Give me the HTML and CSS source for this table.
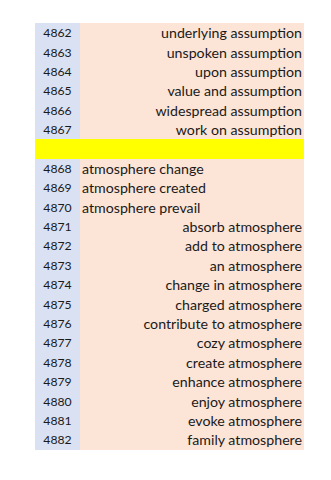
FILE: index.html
```html
<!DOCTYPE html>
<html>
<head>
<meta charset="utf-8">
<link rel="stylesheet" href="styles.css">
</head>
<body>
<div class="sheet">
  <div class="row"><div class="num">4862</div><div class="txt right">underlying assumption</div></div>
  <div class="row"><div class="num">4863</div><div class="txt right">unspoken assumption</div></div>
  <div class="row"><div class="num">4864</div><div class="txt right">upon assumption</div></div>
  <div class="row"><div class="num">4865</div><div class="txt right">value and assumption</div></div>
  <div class="row"><div class="num">4866</div><div class="txt right">widespread assumption</div></div>
  <div class="row"><div class="num">4867</div><div class="txt right">work on assumption</div></div>
  <div class="row sep"></div>
  <div class="row"><div class="num">4868</div><div class="txt">atmosphere change</div></div>
  <div class="row"><div class="num">4869</div><div class="txt">atmosphere created</div></div>
  <div class="row"><div class="num">4870</div><div class="txt">atmosphere prevail</div></div>
  <div class="row"><div class="num">4871</div><div class="txt right">absorb atmosphere</div></div>
  <div class="row"><div class="num">4872</div><div class="txt right">add to atmosphere</div></div>
  <div class="row"><div class="num">4873</div><div class="txt right">an atmosphere</div></div>
  <div class="row"><div class="num">4874</div><div class="txt right">change in atmosphere</div></div>
  <div class="row"><div class="num">4875</div><div class="txt right">charged atmosphere</div></div>
  <div class="row"><div class="num">4876</div><div class="txt right">contribute to atmosphere</div></div>
  <div class="row"><div class="num">4877</div><div class="txt right">cozy atmosphere</div></div>
  <div class="row"><div class="num">4878</div><div class="txt right">create atmosphere</div></div>
  <div class="row"><div class="num">4879</div><div class="txt right">enhance atmosphere</div></div>
  <div class="row"><div class="num">4880</div><div class="txt right">enjoy atmosphere</div></div>
  <div class="row"><div class="num">4881</div><div class="txt right">evoke atmosphere</div></div>
  <div class="row"><div class="num">4882</div><div class="txt right">family atmosphere</div></div>
</div>
</body>
</html>
```
FILE: styles.css
```css
html, body {
  margin: 0;
  padding: 0;
  background: #ffffff;
}
.sheet {
  margin: 23px 0 0 35px;
  width: 269px;
  display: flex;
  flex-direction: column;
  font-family: Lato, "Liberation Sans", sans-serif;
  color: #1a1a1a;
}
.row {
  display: grid;
  grid-template-columns: 45px 224px;
  height: 19.4px;
}
.num {
  background: #d9e1f2;
  font-size: 12.2px;
  display: flex;
  align-items: center;
  justify-content: center;
}
.txt {
  background: #fce4d6;
  font-size: 14.2px;
  display: flex;
  align-items: center;
  padding: 0 2px 0 2px;
  white-space: nowrap;
}
.txt.right {
  justify-content: flex-end;
}
.sep {
  background: #ffff00;
  display: block;
}
```
